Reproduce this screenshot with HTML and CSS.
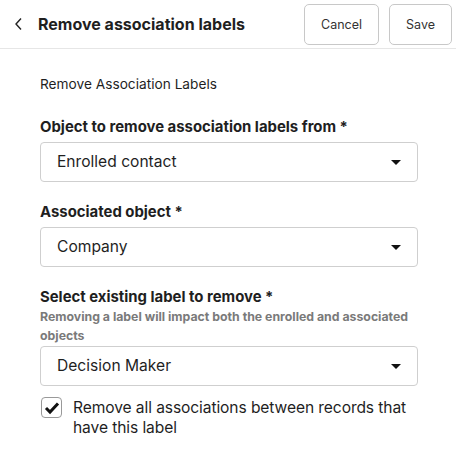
FILE: index.html
```html
<!DOCTYPE html>
<html lang="en">
<head>
    <meta charset="UTF-8">
    <meta name="viewport" content="width=device-width, initial-scale=1.0">
    <title>Remove association labels</title>
    <link rel="stylesheet" href="styles.css">
</head>
<body>
    <div class="header">
        <button class="back" aria-label="Back">
            <svg width="10" height="14" viewBox="0 0 10 14"><path d="M7 1.5 L2 7 L7 12.5" fill="none" stroke="#222" stroke-width="1.4"/></svg>
        </button>
        <h1>Remove association labels</h1>
        <button class="btn">Cancel</button>
        <button class="btn">Save</button>
    </div>

    <div class="panel">
        <p class="intro">Remove Association Labels</p>

        <div class="field">
            <label>Object to remove association labels from *</label>
            <div class="select">Enrolled contact<span class="caret"></span></div>
        </div>

        <div class="field">
            <label>Associated object *</label>
            <div class="select">Company<span class="caret"></span></div>
        </div>

        <div class="field">
            <label>Select existing label to remove *</label>
            <div class="help">Removing a label will impact both the enrolled and associated objects</div>
            <div class="select">Decision Maker<span class="caret"></span></div>
        </div>

        <div class="check">
            <span class="box">
                <svg width="16" height="14" viewBox="0 0 16 14"><path d="M2 7 L6 11 L14 2.5" fill="none" stroke="#111" stroke-width="3"/></svg>
            </span>
            <span class="check-text">Remove all associations between records that have this label</span>
        </div>
    </div>
</body>
</html>
```

FILE: styles.css
```css
body {
    margin: 0;
    font-family: Inter, "Open Sans", sans-serif;
    color: #1f1f1f;
    background: #fff;
}
.header {
    display: flex;
    align-items: center;
    height: 48px;
    padding: 0 4px 0 10px;
    border-bottom: 1px solid #e6e6e6;
}
.back {
    border: none;
    background: none;
    padding: 0 4px;
    margin-right: 10px;
    display: flex;
}
h1 {
    flex: 1;
    margin: 0 0 1px;
    font-size: 16px;
    font-weight: 700;
}
.btn {
    height: 41px;
    padding: 0 16px;
    margin-left: 10px;
    font-family: inherit;
    font-size: 12.5px;
    color: #333;
    background: #fff;
    border: 1px solid #c8c8c8;
    border-radius: 5px;
}
.panel {
    padding: 27px 38px 0 40px;
}
.intro {
    margin: 0 0 26px;
    font-size: 13.7px;
}
.field {
    margin-bottom: 21px;
}
.field label {
    display: block;
    margin-bottom: 6px;
    font-size: 14.9px;
    font-weight: 700;
}
.help {
    margin: -5px 0 1px;
    font-size: 12.3px;
    font-weight: 700;
    line-height: 19px;
    color: #7a7a7a;
}
.select {
    position: relative;
    height: 38px;
    line-height: 38px;
    padding: 0 16px;
    font-size: 15.6px;
    border: 1px solid #cfcfcf;
    border-radius: 4px;
}
.caret {
    position: absolute;
    right: 16px;
    top: 17px;
    border-left: 5px solid transparent;
    border-right: 5px solid transparent;
    border-top: 5px solid #111;
}
.check {
    display: flex;
    align-items: flex-start;
    margin-top: -10px;
    font-size: 15.6px;
    line-height: 20px;
    letter-spacing: -0.1px;
}
.check-text {
    padding-top: 1px;
}
.box {
    flex: none;
    width: 19px;
    height: 19px;
    margin: 0 11px 0 1px;
    border: 1px solid #999;
    border-radius: 4px;
    display: flex;
    align-items: center;
    justify-content: center;
}
```
